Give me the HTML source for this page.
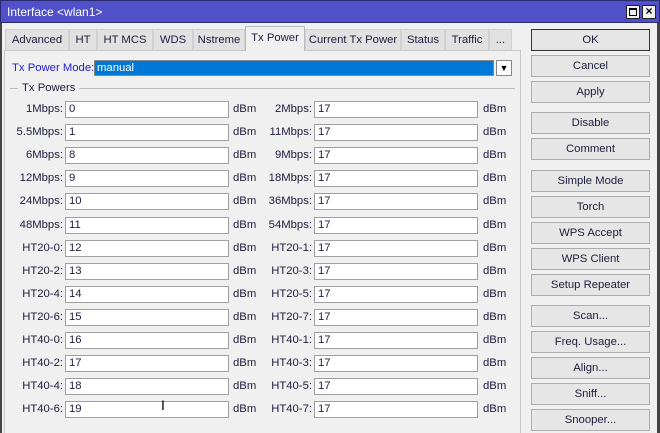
<!DOCTYPE html>
<html><head><style>
*{box-sizing:border-box;margin:0;padding:0}
body{width:660px;height:433px;overflow:hidden;background:#f0f0f0;font-family:"Liberation Sans",sans-serif;font-size:11.3px;color:#1c1c3c;position:relative}
.abs{position:absolute}
.title{left:0;top:0;width:660px;height:23px;background:#5050c8;color:#fff;border:1px solid #2a2a70;}
.title span{position:absolute;left:6px;top:4px;font-size:12px}
.tb{top:4px;width:14px;height:14px;background:#f0f0f0;border:1px solid #222}
.frame{left:0;top:23px;width:660px;height:410px;border-left:2px solid #444;border-right:3px solid #444}
.tab{top:29px;height:21px;background:#e1e1e1;border:1px solid #d0d0d0;border-bottom:none;text-align:center;line-height:20px;white-space:nowrap;overflow:hidden}
.tab.sel{background:#f0f0f0;border-color:#bbb;top:26px;height:25px;z-index:2;line-height:22px}
.panel{left:4px;top:50px;width:517px;height:383px;border:1px solid #c8c8c8;border-bottom:none;background:#f0f0f0}
.fld{height:17px;background:#fff;border:1px solid #a0a0a0;padding-left:3px;line-height:15px}
.lab{text-align:right;line-height:17px;white-space:nowrap}
.btn{left:531px;width:119px;height:22px;border:1px solid #adadad;background:#e6e6e6;text-align:center;line-height:20px}
</style></head><body>
<div class="abs frame"></div>
<div class="abs title"><span>Interface &lt;wlan1&gt;</span>
<div class="abs tb" style="left:625px"><div style="position:absolute;left:2px;top:2px;width:8px;height:8px;border:1px solid #000;border-top-width:2px"></div></div>
<div class="abs tb" style="left:641px;text-align:center;line-height:11px;font-weight:bold;font-size:12px;color:#000">×</div></div>
<div class="abs panel"></div>
<div class="abs tab" style="left:5px;width:64px">Advanced</div>
<div class="abs tab" style="left:69px;width:28px">HT</div>
<div class="abs tab" style="left:97px;width:56px">HT MCS</div>
<div class="abs tab" style="left:153px;width:40px">WDS</div>
<div class="abs tab" style="left:193px;width:52px">Nstreme</div>
<div class="abs tab sel" style="left:245px;width:60px">Tx Power</div>
<div class="abs tab" style="left:305px;width:96px">Current Tx Power</div>
<div class="abs tab" style="left:401px;width:44px">Status</div>
<div class="abs tab" style="left:445px;width:44px">Traffic</div>
<div class="abs tab" style="left:489px;width:23px">...</div>
<div class="abs" style="left:12px;top:61px;color:#2020d0;line-height:14px">Tx Power Mode:</div>
<div class="abs" style="left:94px;top:60px;width:400px;height:16px;background:#0078d7;color:#fff;border:1px solid #888;padding-left:2px;line-height:14px">manual</div>
<div class="abs" style="left:496px;top:60px;width:16px;height:16px;border:1px solid #888;background:#fff;text-align:center;font-size:9px;line-height:14px;color:#000">▼</div>
<div class="abs" style="left:10px;top:88px;width:505px;height:1px;background:#bbb"></div>
<div class="abs" style="left:18px;top:81px;padding:0 4px;background:#f0f0f0;line-height:14px">Tx Powers</div>
<div id="rows"></div>
<script>
var L=[["1Mbps","0","2Mbps"],["5.5Mbps","1","11Mbps"],["6Mbps","8","9Mbps"],["12Mbps","9","18Mbps"],["24Mbps","10","36Mbps"],["48Mbps","11","54Mbps"],["HT20-0","12","HT20-1"],["HT20-2","13","HT20-3"],["HT20-4","14","HT20-5"],["HT20-6","15","HT20-7"],["HT40-0","16","HT40-1"],["HT40-2","17","HT40-3"],["HT40-4","18","HT40-5"],["HT40-6","19","HT40-7"]];
var h="";L.forEach(function(r,i){var t=Math.round(101+i*23.1);
h+='<div class="abs lab" style="left:0;width:63px;top:'+t+'px">'+r[0]+':</div><div class="abs fld" style="left:65px;width:164px;top:'+t+'px">'+r[1]+'</div><div class="abs lab" style="left:233px;top:'+t+'px">dBm</div>';
h+='<div class="abs lab" style="left:250px;width:62px;top:'+t+'px">'+r[2]+':</div><div class="abs fld" style="left:314px;width:164px;top:'+t+'px">17</div><div class="abs lab" style="left:483px;top:'+t+'px">dBm</div>';});
var B=[["OK",29],["Cancel",55],["Apply",81],["Disable",112],["Comment",138],["Simple Mode",170],["Torch",196],["WPS Accept",222],["WPS Client",248],["Setup Repeater",274],["Scan...",305],["Freq. Usage...",331],["Align...",357],["Sniff...",383],["Snooper...",409]];
B.forEach(function(b,i){h+='<div class="abs btn" style="top:'+b[1]+'px;'+(i==0?'border-color:#333;':'')+'">'+b[0]+'</div>';});
document.getElementById("rows").innerHTML=h;
</script>
<div class="abs" style="left:161px;top:397px;font-size:14px;color:#000">I</div>
</body></html>
